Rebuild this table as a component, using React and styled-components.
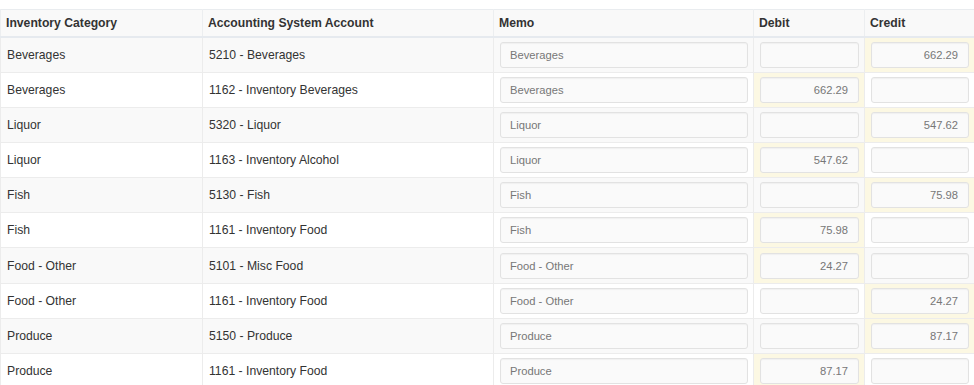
import React from "react";
import styled, { createGlobalStyle } from "styled-components";

const GlobalStyle = createGlobalStyle`
  body {
    margin: 0;
    background: #fff;
    font-family: "Liberation Sans", Arial, sans-serif;
    font-size: 12.2px;
    color: #333;
  }
`;

const Wrap = styled.div`
  padding-top: 9px;
`;

const Table = styled.table`
  width: 974px;
  border-collapse: collapse;
  table-layout: fixed;
  border: 1px solid #e9ecef;
`;

const HeadCell = styled.th`
  text-align: left;
  font-weight: bold;
  font-size: 12.2px;
  color: #333;
  background: #f9f9f9;
  height: 27px;
  padding: 0 5px;
  border-left: 1px solid #eceef0;
  border-bottom: 2px solid #e6eaef;
  box-sizing: border-box;
`;

const Row = styled.tr`
  background: ${(p) => (p.$odd ? "#f9f9f9" : "#fff")};
`;

const Cell = styled.td`
  height: 35.2px;
  padding: 4px 5px 4px 6px;
  box-sizing: border-box;
  border-top: 1px solid #ececec;
  border-left: 1px solid #ececec;
  color: #333;
  font-size: 12.2px;
  vertical-align: middle;
  background: ${(p) => (p.$hl ? "#fcf8e3" : "transparent")};
`;

const Field = styled.div`
  height: 26px;
  box-sizing: border-box;
  border: 1px solid #e2e2e2;
  border-radius: 3px;
  background: #fafafa;
  box-shadow: inset 0 1px 1px rgba(0, 0, 0, 0.04);
  display: flex;
  align-items: center;
  justify-content: ${(p) => (p.$num ? "flex-end" : "flex-start")};
  padding: 0 10px 0 9px;
  font-size: 11.2px;
  color: #777;
`;

const rows = [
  ["Beverages", "5210 - Beverages", "Beverages", "", "662.29"],
  ["Beverages", "1162 - Inventory Beverages", "Beverages", "662.29", ""],
  ["Liquor", "5320 - Liquor", "Liquor", "", "547.62"],
  ["Liquor", "1163 - Inventory Alcohol", "Liquor", "547.62", ""],
  ["Fish", "5130 - Fish", "Fish", "", "75.98"],
  ["Fish", "1161 - Inventory Food", "Fish", "75.98", ""],
  ["Food - Other", "5101 - Misc Food", "Food - Other", "24.27", ""],
  ["Food - Other", "1161 - Inventory Food", "Food - Other", "", "24.27"],
  ["Produce", "5150 - Produce", "Produce", "", "87.17"],
  ["Produce", "1161 - Inventory Food", "Produce", "87.17", ""],
];

export default function App() {
  return (
    <>
      <GlobalStyle />
      <Wrap>
        <Table>
          <colgroup>
            <col style={{ width: 202 }} />
            <col style={{ width: 291 }} />
            <col style={{ width: 260 }} />
            <col style={{ width: 111 }} />
            <col style={{ width: 110 }} />
          </colgroup>
          <thead>
            <tr>
              <HeadCell>Inventory Category</HeadCell>
              <HeadCell>Accounting System Account</HeadCell>
              <HeadCell>Memo</HeadCell>
              <HeadCell>Debit</HeadCell>
              <HeadCell>Credit</HeadCell>
            </tr>
          </thead>
          <tbody>
            {rows.map(([cat, acct, memo, debit, credit], i) => (
              <Row key={i} $odd={i % 2 === 0}>
                <Cell>{cat}</Cell>
                <Cell>{acct}</Cell>
                <Cell>
                  <Field>{memo}</Field>
                </Cell>
                <Cell $hl={!!debit}>
                  <Field $num>{debit}</Field>
                </Cell>
                <Cell $hl={!!credit}>
                  <Field $num>{credit}</Field>
                </Cell>
              </Row>
            ))}
          </tbody>
        </Table>
      </Wrap>
    </>
  );
}
